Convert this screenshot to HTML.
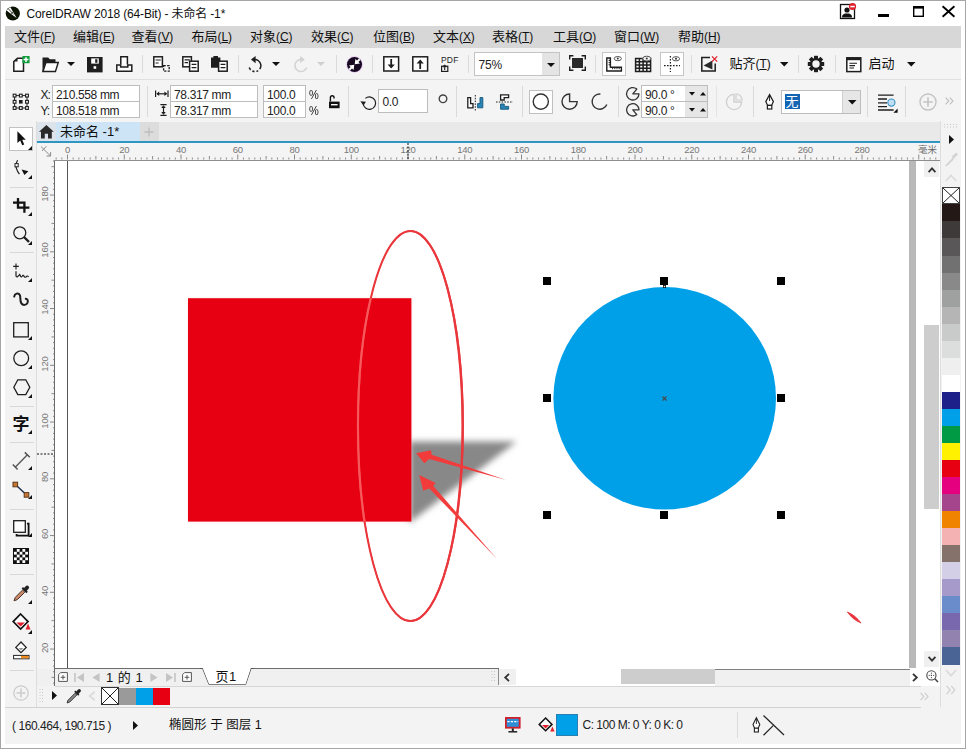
<!DOCTYPE html><html lang="zh"><head><meta charset="utf-8"><title>CorelDRAW 2018 (64-Bit) - 未命名 -1*</title><style>
*{box-sizing:border-box;margin:0;padding:0}
html,body{width:966px;height:749px;overflow:hidden;background:#fff}
body{position:relative;font-family:"Liberation Sans","Noto Sans CJK SC",sans-serif;font-size:12px;color:#1a1a1a}
.a{position:absolute}
.t{position:absolute;white-space:nowrap;line-height:1}
.box{position:absolute;background:#fff;border:1px solid #b8b8b8}
.sep{position:absolute;width:1px;background:#dcdcdc}
.hsep{position:absolute;height:1px;background:#d9d9d9}
svg{position:absolute;overflow:visible}
u{text-decoration:underline;text-underline-offset:1px}
</style></head><body>
<div class="a" style="left:0px;top:0px;width:966px;height:1px;background:#a6a6a6;"></div>
<div class="a" style="left:0px;top:0px;width:1px;height:749px;background:#a6a6a6;"></div>
<div class="a" style="left:965px;top:0px;width:1px;height:749px;background:#a6a6a6;"></div>
<div class="a" style="left:0px;top:748px;width:966px;height:1px;background:#a6a6a6;"></div>
<div class="a" style="left:5px;top:26px;width:956px;height:22px;background:#d7d7d7;"></div>
<div class="a" style="left:5px;top:48px;width:956px;height:74px;background:#f4f4f4;"></div>
<div class="a" style="left:5px;top:79px;width:956px;height:1px;background:#e0e0e0;"></div>
<div class="a" style="left:37px;top:122px;width:903px;height:20px;background:#e9e9e9;"></div>
<div class="a" style="left:5px;top:121px;width:32px;height:587px;background:#f3f3f3;"></div>
<div class="a" style="left:36px;top:121px;width:1px;height:586px;background:#dddddd;"></div>
<div class="a" style="left:37px;top:143px;width:903px;height:17px;background:#f4f4f4;"></div>
<div class="a" style="left:37px;top:160px;width:18px;height:526px;background:#f4f4f4;"></div>
<div class="a" style="left:909px;top:160px;width:7px;height:508px;background:#b9b9b9;"></div>
<div class="a" style="left:940px;top:121px;width:21px;height:587px;background:#f3f3f3;"></div>
<div class="a" style="left:940px;top:121px;width:1px;height:586px;background:#dddddd;"></div>
<div class="a" style="left:37px;top:669px;width:462px;height:17px;background:#f0f0f0;"></div>
<div class="a" style="left:715px;top:669px;width:195px;height:17px;background:#f0f0f0;"></div>
<div class="a" style="left:37px;top:686px;width:903px;height:22px;background:#f3f3f3;"></div>
<div class="a" style="left:5px;top:707px;width:956px;height:37px;background:#f3f3f3;"></div>
<div class="a" style="left:5px;top:706.5px;width:916px;height:1px;background:#d2d2d2;"></div>
<svg class="a" style="left:0;top:0" width="966" height="749" viewBox="0 0 966 749">
<defs><filter id="bl" x="-20%" y="-20%" width="140%" height="140%"><feGaussianBlur stdDeviation="3.2"/></filter>
<filter id="bl2" x="-20%" y="-20%" width="140%" height="140%"><feGaussianBlur stdDeviation="1.2"/></filter><clipPath id="sq"><rect x="188" y="298.2" width="223.4" height="223.4"/></clipPath></defs>
<polygon points="409,441.5 516.5,441.5 409,523" fill="#888888" filter="url(#bl)"/>
<rect x="187.5" y="297.6" width="224.6" height="224.6" fill="#f6cfcf" filter="url(#bl2)" opacity="0.35"/>
<rect x="188" y="298.2" width="223.4" height="223.4" fill="#e60012"/>
<circle cx="664.7" cy="398.3" r="111.3" fill="#00a0e9"/>
<path d="M357.3,426 A53.3,196 0 1 0 463.90000000000003,426 A53.3,196 0 1 0 357.3,426 Z M358.70000000000005,426 A51.4,194.1 0 1 0 461.5,426 A51.4,194.1 0 1 0 358.70000000000005,426 Z" fill="#e9373c" fill-rule="evenodd"/><ellipse cx="410.4" cy="426" rx="52.45" ry="195.1" fill="none" stroke="#e9373c" stroke-width="2"/><ellipse cx="410.4" cy="426" rx="52.45" ry="195.1" fill="none" stroke="#f6585c" stroke-width="2.2" clip-path="url(#sq)"/>
<polygon points="416,453.3 431,450.3 431.7,454.8 506.2,480 429.2,458.9 424.4,463.2" fill="#f23c3c"/>
<polygon points="419.2,475 435.7,483 433.3,486 497,559 429.3,488.4 423.2,490.8" fill="#f23c3c"/>
<path d="M847.4,612 Q855.6,615.4 861,623 Q852.6,619.6 847.4,612 Z" fill="#e8303a" stroke="#e8303a" stroke-width="0.8"/>
</svg>
<div class="a" style="left:543px;top:277px;width:8px;height:8px;background:#000;"></div>
<div class="a" style="left:543px;top:394px;width:8px;height:8px;background:#000;"></div>
<div class="a" style="left:543px;top:511px;width:8px;height:8px;background:#000;"></div>
<div class="a" style="left:660px;top:277px;width:8px;height:8px;background:#000;"></div>
<div class="a" style="left:660px;top:511px;width:8px;height:8px;background:#000;"></div>
<div class="a" style="left:777px;top:277px;width:8px;height:8px;background:#000;"></div>
<div class="a" style="left:777px;top:394px;width:8px;height:8px;background:#000;"></div>
<div class="a" style="left:777px;top:511px;width:8px;height:8px;background:#000;"></div>
<svg style="left:661.5px;top:395.5px" width="5" height="5" viewBox="0 0 5 5"><path d="M0.5,0.5 L4.5,4.5 M4.5,0.5 L0.5,4.5" stroke="#4a4a4a" stroke-width="1.2"/></svg>
<svg style="left:662.5px;top:285px" width="3" height="3" viewBox="0 0 3 3"><rect x="0.4" y="0.4" width="2.2" height="2.2" fill="#fff" stroke="#111" stroke-width="0.8"/></svg>
<svg style="left:5px;top:5.5px" width="16" height="16" viewBox="0 0 16 16"><circle cx="7.8" cy="7.5" r="7.1" fill="#0b1403"/><path d="M1.5,4.6 L5.2,1 L11.6,11.9 Z" fill="#fff"/><path d="M3.4,2.8 L8.6,8.4" stroke="#0b1403" stroke-width="0.8"/><path d="M5.6,8.2 L8.6,5.4" stroke="#0b1403" stroke-width="0.7"/></svg>
<div class="t" style="left:26.5px;top:7.5px;font-size:12px;color:#111;letter-spacing:-0.15px">CoreIDRAW 2018 (64-Bit) - 未命名 -1*</div>
<svg style="left:840px;top:4px" width="16" height="15" viewBox="0 0 16 15"><rect x="0.5" y="0.5" width="14" height="14" fill="#fff" stroke="#111" stroke-width="1.3"/><circle cx="7" cy="6" r="2.6" fill="#111"/><path d="M2,13.6 C2,10 4.5,9.6 7,9.6 C9.5,9.6 12,10 12,13.6 Z" fill="#111"/><circle cx="12.5" cy="2.5" r="3.6" fill="#e0202c"/><rect x="10.3" y="1.8" width="4.4" height="1.5" fill="#fff"/></svg>
<div class="a" style="left:878px;top:14px;width:11px;height:3px;background:#000;"></div>
<svg style="left:913px;top:6px" width="11" height="11" viewBox="0 0 11 11"><rect x="0.7" y="0.7" width="9.6" height="9.6" fill="none" stroke="#000" stroke-width="1.4"/><rect x="0" y="0" width="11" height="2.6" fill="#000"/></svg>
<svg style="left:942px;top:6px" width="13" height="11" viewBox="0 0 13 11"><path d="M0.6,0.3 L12.4,10.7 M12.4,0.3 L0.6,10.7" stroke="#000" stroke-width="1.9"/></svg>
<div class="t" style="left:14px;top:29.5px;font-size:13px;color:#111;">文件<span style="font-size:12px;letter-spacing:-0.1px">(<u>F</u>)</span></div>
<div class="t" style="left:73px;top:29.5px;font-size:13px;color:#111;">编辑<span style="font-size:12px;letter-spacing:-0.1px">(<u>E</u>)</span></div>
<div class="t" style="left:131.5px;top:29.5px;font-size:13px;color:#111;">查看<span style="font-size:12px;letter-spacing:-0.1px">(<u>V</u>)</span></div>
<div class="t" style="left:191.5px;top:29.5px;font-size:13px;color:#111;">布局<span style="font-size:12px;letter-spacing:-0.1px">(<u>L</u>)</span></div>
<div class="t" style="left:250px;top:29.5px;font-size:13px;color:#111;">对象<span style="font-size:12px;letter-spacing:-0.1px">(<u>C</u>)</span></div>
<div class="t" style="left:311px;top:29.5px;font-size:13px;color:#111;">效果<span style="font-size:12px;letter-spacing:-0.1px">(<u>C</u>)</span></div>
<div class="t" style="left:373px;top:29.5px;font-size:13px;color:#111;">位图<span style="font-size:12px;letter-spacing:-0.1px">(<u>B</u>)</span></div>
<div class="t" style="left:433px;top:29.5px;font-size:13px;color:#111;">文本<span style="font-size:12px;letter-spacing:-0.1px">(<u>X</u>)</span></div>
<div class="t" style="left:492px;top:29.5px;font-size:13px;color:#111;">表格<span style="font-size:12px;letter-spacing:-0.1px">(<u>T</u>)</span></div>
<div class="t" style="left:553px;top:29.5px;font-size:13px;color:#111;">工具<span style="font-size:12px;letter-spacing:-0.1px">(<u>O</u>)</span></div>
<div class="t" style="left:614px;top:29.5px;font-size:13px;color:#111;">窗口<span style="font-size:12px;letter-spacing:-0.1px">(<u>W</u>)</span></div>
<div class="t" style="left:678px;top:29.5px;font-size:13px;color:#111;">帮助<span style="font-size:12px;letter-spacing:-0.1px">(<u>H</u>)</span></div>
<svg style="left:13px;top:56px" width="17" height="16" viewBox="0 0 17 16"><path d="M0.8,15.3 V5.5 L4.5,2.3 H10.5 V15.3 Z" fill="#fff" stroke="#1e1e1e" stroke-width="1.5" stroke-linejoin="miter"/><path d="M0.8,5.5 L4.5,2.3 V5.5 Z" fill="#1e1e1e"/><rect x="9.4" y="0" width="7.2" height="7.2" fill="#0f9d3c"/><path d="M13,1.2 V6 M10.6,3.6 H15.4" stroke="#fff" stroke-width="1.5"/></svg>
<svg style="left:41.5px;top:56.5px" width="17" height="15.5" viewBox="0 0 17 15.5"><path d="M0.5,14.8 V0.5 H6.2 L7.8,2.3 H13.5 V5.2 H3.6 Z" fill="#1e1e1e"/><path d="M0.9,14.6 L3.9,5.6 H16.2 L13.4,14.6 Z" fill="#fff" stroke="#1e1e1e" stroke-width="1.5"/></svg>
<svg style="left:66.5px;top:62px" width="8" height="4" viewBox="0 0 8 4"><path d="M0,0 H8 L4.0,4 Z" fill="#111"/></svg>
<svg style="left:87px;top:56.5px" width="16" height="15.5" viewBox="0 0 16 15.5"><path d="M0,0 H15.6 V15.4 H0 Z" fill="#1e1e1e"/><rect x="4.2" y="1.4" width="7.6" height="5.2" fill="#fff"/><rect x="8.2" y="2.2" width="2.2" height="3.6" fill="#1e1e1e"/><rect x="6.6" y="9.2" width="2.6" height="2.6" fill="#fff"/></svg>
<svg style="left:116px;top:56px" width="17" height="16" viewBox="0 0 17 16"><path d="M4.8,8.6 V0.8 H11.4 V8.6" fill="#fff" stroke="#1e1e1e" stroke-width="1.5"/><path d="M0.8,9 H4.6 V11 H11.8 V9 H15.8 V15.2 H0.8 Z" fill="#fff" stroke="#1e1e1e" stroke-width="1.5"/></svg>
<div class="a" style="left:142px;top:55px;width:1px;height:18px;background:#dadada;"></div>
<svg style="left:152.5px;top:56px" width="17" height="16" viewBox="0 0 17 16"><rect x="0.8" y="0.8" width="8.6" height="10" fill="#fff" stroke="#1e1e1e" stroke-width="1.5"/><path d="M2.6,4 H7.8 M2.6,7 H5.6" stroke="#1e1e1e" stroke-width="1.2"/><rect x="10.6" y="9.6" width="5.6" height="5.6" fill="none" stroke="#1e1e1e" stroke-width="1.3" stroke-dasharray="2.2 1.3"/></svg>
<svg style="left:181.5px;top:56px" width="17" height="16" viewBox="0 0 17 16"><rect x="0.8" y="0.8" width="8.6" height="10" fill="#fff" stroke="#1e1e1e" stroke-width="1.5"/><path d="M2.6,3.8 H7.8 M2.6,6.6 H6" stroke="#1e1e1e" stroke-width="1.2"/><rect x="7.6" y="5.2" width="8.6" height="10" fill="#fff" stroke="#1e1e1e" stroke-width="1.5"/><path d="M9.6,8.4 H14.4 M9.6,11.6 H14.4" stroke="#1e1e1e" stroke-width="1.3"/></svg>
<svg style="left:211px;top:56px" width="17" height="16" viewBox="0 0 17 16"><path d="M0,1.6 H2.4 V0 H7 V1.6 H9.4 V11.8 H0 Z" fill="#1e1e1e"/><rect x="7.6" y="5.2" width="8.6" height="10" fill="#fff" stroke="#1e1e1e" stroke-width="1.5"/><path d="M9.6,8.4 H14.4 M9.6,11.6 H14.4" stroke="#1e1e1e" stroke-width="1.3"/></svg>
<div class="a" style="left:237.5px;top:55px;width:1px;height:18px;background:#dadada;"></div>
<svg style="left:247px;top:56px" width="17" height="16" viewBox="0 0 17 16"><path d="M7.2,3.6 A6,6 0 1 1 2.2,11.6" fill="none" stroke="#1e1e1e" stroke-width="1.5" stroke-dasharray="13.5 2 2 2 2 2 20"/><path d="M8.6,0 V7.2 L4,3.6 Z" fill="#1e1e1e"/></svg>
<svg style="left:272px;top:62px" width="8" height="4" viewBox="0 0 8 4"><path d="M0,0 H8 L4.0,4 Z" fill="#111"/></svg>
<svg style="left:291.5px;top:56px" width="17" height="16" viewBox="0 0 17 16"><path d="M9.6,3.6 A6,6 0 1 0 14.6,11.6" fill="none" stroke="#d2d2d2" stroke-width="1.5"/><path d="M8.2,0 V7.2 L12.8,3.6 Z" fill="#d2d2d2"/></svg>
<svg style="left:317px;top:62px" width="8" height="4" viewBox="0 0 8 4"><path d="M0,0 H8 L4.0,4 Z" fill="#cfcfcf"/></svg>
<div class="a" style="left:335.5px;top:55px;width:1px;height:18px;background:#dadada;"></div>
<svg style="left:345.5px;top:55.5px" width="17" height="17" viewBox="0 0 17 17"><circle cx="8.5" cy="8.5" r="8.3" fill="#e3c4ee"/><circle cx="8.5" cy="8.5" r="7.5" fill="#170a20"/><g transform="translate(17,0) scale(-1,1)"><path d="M8.3,8.3 L3,7.6 L4.6,6 L2.6,4 L4,2.6 L6,4.6 L7.6,3 Z" fill="#fff"/><path d="M8.7,8.7 L14,9.4 L12.4,11 L14.4,13 L13,14.4 L11,12.4 L9.4,14 Z" fill="#fff"/></g></svg>
<div class="a" style="left:372px;top:55px;width:1px;height:18px;background:#dadada;"></div>
<svg style="left:383px;top:56px" width="17" height="16" viewBox="0 0 17 16"><rect x="0.8" y="0.8" width="14.8" height="14.2" fill="#fff" stroke="#1e1e1e" stroke-width="1.5"/><path d="M8.2,3 V11" stroke="#1e1e1e" stroke-width="1.8"/><path d="M4.6,8.4 H11.8 L8.2,12.6 Z" fill="#1e1e1e"/></svg>
<svg style="left:412px;top:56px" width="17" height="16" viewBox="0 0 17 16"><rect x="0.8" y="0.8" width="14.8" height="14.2" fill="#fff" stroke="#1e1e1e" stroke-width="1.5"/><path d="M8.2,13 V5" stroke="#1e1e1e" stroke-width="1.8"/><path d="M4.6,7.6 H11.8 L8.2,3.4 Z" fill="#1e1e1e"/></svg>
<div class="t" style="left:441px;top:56px;font-size:8.5px;color:#1e1e1e;letter-spacing:0.2px;font-weight:400">PDF</div>
<svg style="left:441px;top:65px" width="8" height="7" viewBox="0 0 8 7"><rect x="0.6" y="1.2" width="6.2" height="5.2" fill="none" stroke="#1e1e1e" stroke-width="1.2"/><path d="M3.7,0 V5 M2,2 L3.7,0.2 L5.4,2" stroke="#1e1e1e" stroke-width="1.1" fill="none"/></svg>
<div class="a" style="left:467.5px;top:55px;width:1px;height:18px;background:#dadada;"></div>
<div class="box" style="left:474px;top:52px;width:86px;height:24px;border-color:#c3c3c3"></div>
<div class="a" style="left:542px;top:53px;width:17px;height:22px;background:#e4e4e4;"></div>
<svg style="left:546.5px;top:62.5px" width="8" height="4" viewBox="0 0 8 4"><path d="M0,0 H8 L4.0,4 Z" fill="#111"/></svg>
<div class="t" style="left:478.5px;top:58.5px;font-size:12px;color:#222;letter-spacing:-0.2px">75%</div>
<svg style="left:568.5px;top:55px" width="17" height="16" viewBox="0 0 17 16"><rect x="3" y="3" width="11" height="10" fill="#2a2a2a"/><path d="M0.7,4.4 V0.7 H4.4 M12.6,0.7 H16.3 V4.4 M16.3,11.6 V15.3 H12.6 M4.4,15.3 H0.7 V11.6" fill="none" stroke="#1e1e1e" stroke-width="1.4"/></svg>
<div class="a" style="left:595px;top:55px;width:1px;height:18px;background:#dadada;"></div>
<div class="box" style="left:602px;top:52px;width:24px;height:24px;border-color:#c6c6c6"></div>
<svg style="left:606px;top:56px" width="17" height="16" viewBox="0 0 17 16"><path d="M0.8,2 V15 H15.4 V11.2 H4.4 V2 Z" fill="#fff" stroke="#1e1e1e" stroke-width="1.4"/><path d="M2.6,4.4 H4 M2.6,6.6 H4 M2.6,8.8 H4 M6.6,13.2 V11.8 M8.8,13.2 V11.8 M11,13.2 V11.8 M13.2,13.2 V11.8" stroke="#1e1e1e" stroke-width="1"/><ellipse cx="11.8" cy="2.6" rx="3.6" ry="2.1" fill="#fff" stroke="#555" stroke-width="1"/><circle cx="11.8" cy="2.6" r="1" fill="#333"/></svg>
<svg style="left:635px;top:55.5px" width="17" height="16" viewBox="0 0 17 16"><path d="M0.6,2.6 V15.4 H15.6 V2.6 Z M4.4,2.6 V15.4 M8.1,2.6 V15.4 M11.8,2.6 V15.4 M0.6,5.8 H15.6 M0.6,9 H15.6 M0.6,12.2 H15.6" fill="none" stroke="#1e1e1e" stroke-width="1.5"/><ellipse cx="11.8" cy="2.6" rx="4" ry="2.4" fill="#f3f3f3" stroke="#555" stroke-width="1"/><circle cx="11.8" cy="2.6" r="1" fill="#333"/></svg>
<div class="box" style="left:660px;top:52px;width:24px;height:24px;border-color:#c6c6c6"></div>
<svg style="left:664px;top:56px" width="17" height="16" viewBox="0 0 17 16"><path d="M6.4,0 V16 M0,9.6 H16" stroke="#1e1e1e" stroke-width="1.2" stroke-dasharray="1.6 1.4"/><ellipse cx="12" cy="2.8" rx="3.6" ry="2.1" fill="#fff" stroke="#555" stroke-width="1"/><circle cx="12" cy="2.8" r="1" fill="#333"/></svg>
<div class="a" style="left:690.5px;top:55px;width:1px;height:18px;background:#dadada;"></div>
<svg style="left:701px;top:56px" width="17" height="16" viewBox="0 0 17 16"><path d="M9,1.6 H0.8 V15 H14.2 V7.4" fill="none" stroke="#1e1e1e" stroke-width="1.5"/><path d="M2.6,9.4 L11.4,4.4 V13.4 Z" fill="#2a2a2a"/><path d="M11,0.4 L16.2,5.6 M16.2,0.4 L11,5.6" stroke="#e0202c" stroke-width="1.3"/></svg>
<div class="t" style="left:729.5px;top:57px;font-size:13px;color:#111;">贴齐<span style="font-size:12px;letter-spacing:-0.1px">(<u>T</u>)</span></div>
<svg style="left:779.5px;top:62px" width="8.5" height="4.5" viewBox="0 0 8.5 4.5"><path d="M0,0 H8.5 L4.25,4.5 Z" fill="#111"/></svg>
<div class="a" style="left:798px;top:55px;width:1px;height:18px;background:#dadada;"></div>
<svg style="left:808px;top:56px" width="16" height="16" viewBox="0 0 16 16"><g transform="translate(8,8)"><rect x="-2" y="-8.2" width="4" height="4" fill="#1e1e1e" transform="rotate(0)"/><rect x="-2" y="-8.2" width="4" height="4" fill="#1e1e1e" transform="rotate(45)"/><rect x="-2" y="-8.2" width="4" height="4" fill="#1e1e1e" transform="rotate(90)"/><rect x="-2" y="-8.2" width="4" height="4" fill="#1e1e1e" transform="rotate(135)"/><rect x="-2" y="-8.2" width="4" height="4" fill="#1e1e1e" transform="rotate(180)"/><rect x="-2" y="-8.2" width="4" height="4" fill="#1e1e1e" transform="rotate(225)"/><rect x="-2" y="-8.2" width="4" height="4" fill="#1e1e1e" transform="rotate(270)"/><rect x="-2" y="-8.2" width="4" height="4" fill="#1e1e1e" transform="rotate(315)"/><circle r="4.9" fill="none" stroke="#1e1e1e" stroke-width="2.4"/></g></svg>
<div class="a" style="left:835px;top:55px;width:1px;height:18px;background:#dadada;"></div>
<svg style="left:845.5px;top:56.5px" width="16" height="15.5" viewBox="0 0 16 15.5"><rect x="0.8" y="0.8" width="14" height="13.8" fill="#fff" stroke="#1e1e1e" stroke-width="1.5"/><rect x="0.8" y="0.8" width="14" height="2.4" fill="#1e1e1e"/><path d="M3.4,6.2 H11 M3.4,8.6 H9 M3.4,11 H8" stroke="#1e1e1e" stroke-width="1.1"/></svg>
<div class="t" style="left:868.5px;top:57px;font-size:13px;color:#111;">启动</div>
<svg style="left:906.5px;top:62px" width="8.5" height="4.5" viewBox="0 0 8.5 4.5"><path d="M0,0 H8.5 L4.25,4.5 Z" fill="#111"/></svg>
<svg style="left:13px;top:93.5px" width="16" height="16" viewBox="0 0 16 16"><path d="M1.6,1.6 H14 V14 H1.6 Z" fill="none" stroke="#1e1e1e" stroke-width="1"/><rect x="0.20000000000000018" y="0.20000000000000018" width="2.8" height="2.8" fill="#fff" stroke="#1e1e1e" stroke-width="1.1"/><rect x="0.20000000000000018" y="6.4" width="2.8" height="2.8" fill="#fff" stroke="#1e1e1e" stroke-width="1.1"/><rect x="0.20000000000000018" y="12.6" width="2.8" height="2.8" fill="#fff" stroke="#1e1e1e" stroke-width="1.1"/><rect x="6.4" y="0.20000000000000018" width="2.8" height="2.8" fill="#fff" stroke="#1e1e1e" stroke-width="1.1"/><rect x="6.0" y="6.0" width="3.6" height="3.6" fill="#1e1e1e"/><rect x="6.4" y="12.6" width="2.8" height="2.8" fill="#fff" stroke="#1e1e1e" stroke-width="1.1"/><rect x="12.6" y="0.20000000000000018" width="2.8" height="2.8" fill="#fff" stroke="#1e1e1e" stroke-width="1.1"/><rect x="12.6" y="6.4" width="2.8" height="2.8" fill="#fff" stroke="#1e1e1e" stroke-width="1.1"/><rect x="12.6" y="12.6" width="2.8" height="2.8" fill="#fff" stroke="#1e1e1e" stroke-width="1.1"/></svg>
<div class="t" style="left:40.5px;top:88.5px;font-size:12px;color:#222;letter-spacing:-1px">X:</div>
<div class="t" style="left:40.5px;top:104.5px;font-size:12px;color:#222;letter-spacing:-1px">Y:</div>
<div class="box" style="left:52px;top:85px;width:88px;height:17px;border-color:#bdbdbd"></div>
<div class="box" style="left:52px;top:101px;width:88px;height:17px;border-color:#bdbdbd"></div>
<div class="t" style="left:56px;top:88.5px;font-size:12px;color:#222;letter-spacing:-0.35px">210.558 mm</div>
<div class="t" style="left:56px;top:104.5px;font-size:12px;color:#222;letter-spacing:-0.35px">108.518 mm</div>
<div class="a" style="left:147px;top:86px;width:1px;height:31px;background:#dadada;"></div>
<svg style="left:155px;top:90px" width="14" height="8" viewBox="0 0 14 8"><path d="M0.6,0.6 V7 M13,0.6 V7" stroke="#1e1e1e" stroke-width="1.2"/><path d="M2,3.8 H11.6" stroke="#1e1e1e" stroke-width="1.2"/><path d="M1.4,3.8 L4.2,1.6 V6 Z M12.2,3.8 L9.4,1.6 V6 Z" fill="#1e1e1e"/></svg>
<svg style="left:159.5px;top:103.5px" width="7" height="12" viewBox="0 0 7 12"><path d="M0.4,0.6 H6.6 M0.4,11.4 H6.6" stroke="#1e1e1e" stroke-width="1.2"/><path d="M3.5,2 V10" stroke="#1e1e1e" stroke-width="1.2"/><path d="M3.5,1.2 L1.2,4 H5.8 Z M3.5,10.8 L1.2,8 H5.8 Z" fill="#1e1e1e"/></svg>
<div class="box" style="left:170px;top:85px;width:88px;height:17px;border-color:#bdbdbd"></div>
<div class="box" style="left:170px;top:101px;width:88px;height:17px;border-color:#bdbdbd"></div>
<div class="t" style="left:174px;top:88.5px;font-size:12px;color:#222;letter-spacing:-0.35px">78.317 mm</div>
<div class="t" style="left:174px;top:104.5px;font-size:12px;color:#222;letter-spacing:-0.35px">78.317 mm</div>
<div class="box" style="left:263px;top:85px;width:43px;height:17px;border-color:#bdbdbd"></div>
<div class="box" style="left:263px;top:101px;width:43px;height:17px;border-color:#bdbdbd"></div>
<div class="t" style="left:267px;top:88.5px;font-size:12px;color:#222;letter-spacing:-0.35px">100.0</div>
<div class="t" style="left:267px;top:104.5px;font-size:12px;color:#222;letter-spacing:-0.35px">100.0</div>
<div class="t" style="left:308.5px;top:88.5px;font-size:12px;color:#222;letter-spacing:-0.3px;transform:scaleX(0.92);transform-origin:left">%</div>
<div class="t" style="left:308.5px;top:104.5px;font-size:12px;color:#222;letter-spacing:-0.3px;transform:scaleX(0.92);transform-origin:left">%</div>
<svg style="left:328.5px;top:95px" width="11" height="13.5" viewBox="0 0 11 13.5"><rect x="0" y="6.6" width="10.6" height="6.6" fill="#111"/><rect x="2" y="9" width="6.6" height="1.4" fill="#fff"/><path d="M1.4,6.6 V2.6 Q1.4,0.8 3.2,0.8 Q5,0.8 5,2.6 V3.6" fill="none" stroke="#111" stroke-width="1.4"/></svg>
<div class="a" style="left:348px;top:86px;width:1px;height:31px;background:#dadada;"></div>
<svg style="left:360px;top:95px" width="16" height="16" viewBox="0 0 16 16"><path d="M3.2,8.2 A6.2,6.2 0 1 0 5.4,3.4" fill="none" stroke="#1e1e1e" stroke-width="1.2"/><path d="M0.4,6.2 L6,6.8 L3.4,10.4 Z" fill="#1e1e1e"/></svg>
<div class="box" style="left:378px;top:89px;width:50px;height:24px;border-color:#bdbdbd"></div>
<div class="t" style="left:382.5px;top:96px;font-size:12px;color:#222;letter-spacing:-0.35px">0.0</div>
<svg style="left:437.5px;top:94px" width="10" height="10" viewBox="0 0 10 10"><circle cx="5" cy="4.8" r="3.8" fill="none" stroke="#444" stroke-width="1.4"/></svg>
<div class="a" style="left:456px;top:86px;width:1px;height:31px;background:#dadada;"></div>
<svg style="left:466.5px;top:94.5px" width="17" height="16" viewBox="0 0 17 16"><path d="M0.8,2.6 H3.6 V8.6 H6 V12.8 H0.8 Z" fill="#fff" stroke="#1e1e1e" stroke-width="1.3"/><path d="M15.8,2.6 H13 V8.6 H10.6 V12.8 H15.8 Z" fill="#2a86b4" stroke="#1c5f85" stroke-width="1"/><path d="M8.3,0 V16" stroke="#1e1e1e" stroke-width="1" stroke-dasharray="1.5 1.3"/></svg>
<svg style="left:496px;top:94px" width="17" height="16" viewBox="0 0 17 16"><path d="M4.6,0.8 H12.6 V3.6 H8.2 V6 H4.6 Z" fill="#fff" stroke="#1e1e1e" stroke-width="1.3"/><path d="M4.6,15.2 H12.6 V12.4 H8.2 V10 H4.6 Z" fill="#2a86b4" stroke="#1c5f85" stroke-width="1"/><path d="M0,8 H17" stroke="#1e1e1e" stroke-width="1" stroke-dasharray="1.5 1.3"/></svg>
<div class="a" style="left:522px;top:86px;width:1px;height:31px;background:#dadada;"></div>
<div class="box" style="left:529px;top:90px;width:24px;height:24px;border-color:#c0c0c0"></div>
<svg style="left:532px;top:93px" width="18" height="18" viewBox="0 0 18 18"><circle cx="8.8" cy="8.6" r="7.6" fill="none" stroke="#333" stroke-width="1.4"/></svg>
<svg style="left:561px;top:93px" width="18" height="18" viewBox="0 0 18 18"><path d="M8.6,8.6 V1 A7.6,7.6 0 1 0 16.2,8.6 Z" fill="none" stroke="#333" stroke-width="1.4"/></svg>
<svg style="left:591px;top:93px" width="18" height="18" viewBox="0 0 18 18"><path d="M9.4,1 A7.6,7.6 0 1 0 15.8,11.4" fill="none" stroke="#333" stroke-width="1.4"/></svg>
<div class="a" style="left:617.5px;top:86px;width:1px;height:31px;background:#dadada;"></div>
<svg style="left:626px;top:86.5px" width="14" height="14" viewBox="0 0 14 14"><path d="M6.8,6.8 L13,6.8 A6.2,6.2 0 1 1 10.79,2.05 Z" fill="none" stroke="#333" stroke-width="1.3" stroke-linejoin="round"/></svg>
<svg style="left:626px;top:102.5px" width="14" height="14" viewBox="0 0 14 14"><path d="M6.8,6.8 L13,6.8 A6.2,6.2 0 1 0 10.79,11.55 Z" fill="none" stroke="#333" stroke-width="1.3" stroke-linejoin="round"/></svg>
<div class="box" style="left:641px;top:85px;width:67px;height:17px;border-color:#bdbdbd"></div>
<div class="box" style="left:641px;top:101px;width:67px;height:17px;border-color:#bdbdbd"></div>
<div class="a" style="left:684.5px;top:86px;width:22.5px;height:15px;background:#e6e6e6;"></div>
<div class="a" style="left:684.5px;top:102px;width:22.5px;height:15px;background:#e6e6e6;"></div>
<svg style="left:688.5px;top:91.5px" width="6" height="3.5" viewBox="0 0 6 3.5"><path d="M0,0 H6 L3.0,3.5 Z" fill="#111"/></svg>
<svg style="left:700px;top:91.5px" width="6" height="3.5" viewBox="0 0 6 3.5"><path d="M0,3.5 H6 L3,0 Z" fill="#111"/></svg>
<svg style="left:688.5px;top:107.5px" width="6" height="3.5" viewBox="0 0 6 3.5"><path d="M0,0 H6 L3.0,3.5 Z" fill="#111"/></svg>
<svg style="left:700px;top:107.5px" width="6" height="3.5" viewBox="0 0 6 3.5"><path d="M0,3.5 H6 L3,0 Z" fill="#111"/></svg>
<div class="t" style="left:645px;top:88.5px;font-size:12px;color:#222;letter-spacing:-0.35px">90.0 °</div>
<div class="t" style="left:645px;top:104.5px;font-size:12px;color:#222;letter-spacing:-0.35px">90.0 °</div>
<div class="a" style="left:716px;top:86px;width:1px;height:31px;background:#e4e4e4;"></div>
<svg style="left:725px;top:93px" width="18" height="18" viewBox="0 0 18 18"><path d="M9,9 V1.4 A7.6,7.6 0 1 0 16.6,9 Z" fill="none" stroke="#d0d0d0" stroke-width="1.4"/><path d="M11,7 V0.8 A7,7 0 0 1 17.2,7 Z" fill="none" stroke="#d0d0d0" stroke-width="1.2"/></svg>
<div class="a" style="left:753px;top:86px;width:1px;height:31px;background:#dadada;"></div>
<svg style="left:765px;top:93.5px" width="10" height="16" viewBox="0 0 10 16"><path d="M4.6,0.6 L8.4,7.6 L6.6,11.4 H2.6 L0.8,7.6 Z" fill="#fff" stroke="#1e1e1e" stroke-width="1.2"/><path d="M4.6,1.6 V7" stroke="#1e1e1e" stroke-width="1"/><rect x="2.4" y="11.4" width="4.4" height="3.6" fill="#fff" stroke="#1e1e1e" stroke-width="1.2"/></svg>
<div class="box" style="left:781px;top:90px;width:80px;height:24px;border-color:#bdbdbd"></div>
<div class="a" style="left:842.5px;top:91px;width:17.5px;height:22px;background:#e6e6e6;"></div>
<div class="a" style="left:842px;top:91px;width:1px;height:22px;background:#d0d0d0;"></div>
<svg style="left:847.5px;top:99.5px" width="8.5" height="4.5" viewBox="0 0 8.5 4.5"><path d="M0,0 H8.5 L4.25,4.5 Z" fill="#111"/></svg>
<div class="a" style="left:784.5px;top:93.5px;width:15px;height:15.5px;background:#1464b4;"></div>
<div class="t" style="left:785.5px;top:94.5px;font-size:13px;color:#fff;">无</div>
<div class="a" style="left:867px;top:86px;width:1px;height:31px;background:#dadada;"></div>
<svg style="left:877.5px;top:93.5px" width="20" height="19" viewBox="0 0 20 19"><path d="M0,1.2 H15.6 M0,5 H9 M0,8.8 H9 M0,12.6 H9 M0,16 H15.6" stroke="#1e1e1e" stroke-width="1.3"/><circle cx="13.4" cy="8.6" r="3.6" fill="#bfe0f4" stroke="#3b8fc0" stroke-width="1.1"/><path d="M19.6,14.6 V18.8 H15.4 Z" fill="#111"/></svg>
<div class="a" style="left:904.5px;top:86px;width:1px;height:31px;background:#dadada;"></div>
<svg style="left:919px;top:92.5px" width="18" height="18" viewBox="0 0 18 18"><circle cx="9" cy="9" r="8" fill="none" stroke="#c4c4c4" stroke-width="1.4"/><path d="M9,4.2 V13.8 M4.2,9 H13.8" stroke="#c4c4c4" stroke-width="1.6"/></svg>
<svg style="left:944.5px;top:97px" width="9" height="8" viewBox="0 0 9 8"><path d="M0.6,0.6 L3.8,4 L0.6,7.4 M4.8,0.6 L8,4 L4.8,7.4" fill="none" stroke="#c0c0c0" stroke-width="1.2"/></svg>
<div class="a" style="left:37px;top:122px;width:19px;height:20px;background:#dde3ea;"></div>
<div class="a" style="left:56px;top:122px;width:84px;height:20px;background:#cde4f6;"></div>
<div class="a" style="left:140px;top:122px;width:18.5px;height:20px;background:#dcdcdc;"></div>
<svg style="left:38.5px;top:124.5px" width="14.5" height="14.5" viewBox="0 0 14.5 14.5"><path d="M7.4,0 L14.8,6.8 H12.8 V13.4 H9 V8.8 H5.8 V13.4 H2 V6.8 H0 Z" fill="#2a2a2a"/></svg>
<div class="t" style="left:60px;top:125px;font-size:13px;color:#111;">未命名 -1*</div>
<svg style="left:144px;top:127px" width="10" height="10" viewBox="0 0 10 10"><path d="M5,0.5 V9.5 M0.5,5 H9.5" stroke="#bdbdbd" stroke-width="1.3"/></svg>
<div class="a" style="left:37px;top:141.4px;width:903px;height:1.7px;background:#2f96c2;"></div>
<svg style="left:944px;top:124px" width="14" height="4" viewBox="0 0 14 4"><path d="M0,0.5 H14 M0,3 H14" stroke="#c8c8c8" stroke-width="1" stroke-dasharray="1 2"/></svg>
<svg style="left:949px;top:135px" width="5" height="9" viewBox="0 0 5 9"><path d="M0,0 L5,4.5 L0,9 Z" fill="#111"/></svg>
<div class="box" style="left:9px;top:127px;width:24px;height:24px;border-color:#c2c2c2"></div>
<svg style="left:17px;top:131px" width="9" height="15" viewBox="0 0 9 15"><path d="M0.4,0.2 V12 L3.2,9.4 L5.2,14.2 L7.2,13.4 L5.2,8.8 H8.8 Z" fill="#111"/></svg>
<svg style="left:28px;top:146px" width="4" height="4" viewBox="0 0 4 4"><path d="M4,0 V4 H0 Z" fill="#111"/></svg>
<svg style="left:13px;top:159px" width="20" height="20" viewBox="0 0 20 20"><path d="M4.6,1.2 C3,4 2.6,7 3.4,9.4 C4,11.4 5.2,13.6 6.4,15.2" fill="none" stroke="#1e1e1e" stroke-width="1.2"/><rect x="2" y="4.6" width="3.2" height="3.2" fill="#fff" stroke="#1e1e1e" stroke-width="1"/><path d="M8.6,10.6 L15.4,12.2 L11.4,16 Z" fill="#111"/></svg>
<svg style="left:28px;top:175px" width="4" height="4" viewBox="0 0 4 4"><path d="M4,0 V4 H0 Z" fill="#111"/></svg>
<div class="a" style="left:10px;top:187px;width:24px;height:1px;background:#d8d8d8;"></div>
<svg style="left:13px;top:198px" width="17" height="17" viewBox="0 0 17 17"><path d="M5,0 V9.6 H16.4 M0,4.6 H11.4 V14.8" fill="none" stroke="#111" stroke-width="2.3"/></svg>
<svg style="left:28px;top:212px" width="4" height="4" viewBox="0 0 4 4"><path d="M4,0 V4 H0 Z" fill="#111"/></svg>
<svg style="left:12.5px;top:226px" width="18" height="18" viewBox="0 0 18 18"><circle cx="6.8" cy="6.8" r="6" fill="none" stroke="#1e1e1e" stroke-width="1.3"/><path d="M11,11 L16,16" stroke="#1e1e1e" stroke-width="2.4"/></svg>
<svg style="left:28px;top:241px" width="4" height="4" viewBox="0 0 4 4"><path d="M4,0 V4 H0 Z" fill="#111"/></svg>
<div class="a" style="left:10px;top:252px;width:24px;height:1px;background:#d8d8d8;"></div>
<svg style="left:12px;top:263px" width="18" height="17" viewBox="0 0 18 17"><path d="M4,0.6 V6.4 M1.2,3.4 H6.8" stroke="#1e1e1e" stroke-width="1.1"/><path d="M4,8.2 V12.2 Q4,14.4 5.6,13.6 Q7,12.6 7.6,11.4 Q8.4,12 8.6,13.4 Q9.4,14.4 10.4,13 Q11,12 11.6,12.4 Q12.2,13.6 13,14.2 Q14.2,14.4 14.8,13.2 Q15.6,12.6 16.6,13.8" fill="none" stroke="#1e1e1e" stroke-width="1.2"/></svg>
<svg style="left:28px;top:278px" width="4" height="4" viewBox="0 0 4 4"><path d="M4,0 V4 H0 Z" fill="#111"/></svg>
<svg style="left:13px;top:292px" width="17" height="17" viewBox="0 0 17 17"><path d="M1.2,4.6 C1.6,1.4 5.4,0.4 6.8,3 C8,5.6 6.6,8.6 8.4,11.4 C9.8,13.6 13.4,13.4 14.6,10.6 C15.4,8.4 14,6.6 12.8,6.8" fill="none" stroke="#1e1e1e" stroke-width="2" stroke-linecap="round"/></svg>
<svg style="left:13px;top:321.5px" width="16" height="16" viewBox="0 0 16 16"><rect x="0.7" y="0.7" width="14.6" height="14.2" fill="none" stroke="#1e1e1e" stroke-width="1.3"/></svg>
<svg style="left:28px;top:336px" width="4" height="4" viewBox="0 0 4 4"><path d="M4,0 V4 H0 Z" fill="#111"/></svg>
<svg style="left:13px;top:350px" width="17" height="17" viewBox="0 0 17 17"><circle cx="8.2" cy="8.2" r="7.4" fill="none" stroke="#1e1e1e" stroke-width="1.3"/></svg>
<svg style="left:28px;top:365px" width="4" height="4" viewBox="0 0 4 4"><path d="M4,0 V4 H0 Z" fill="#111"/></svg>
<svg style="left:12.5px;top:379px" width="18" height="17" viewBox="0 0 18 17"><path d="M0.8,8.2 L4.8,0.8 H12.8 L16.8,8.2 L12.8,15.6 H4.8 Z" fill="none" stroke="#1e1e1e" stroke-width="1.3"/></svg>
<svg style="left:28px;top:394px" width="4" height="4" viewBox="0 0 4 4"><path d="M4,0 V4 H0 Z" fill="#111"/></svg>
<div class="a" style="left:10px;top:405.5px;width:24px;height:1px;background:#d8d8d8;"></div>
<div class="t" style="left:12.5px;top:415.5px;font-size:17px;color:#111;font-weight:700">字</div>
<svg style="left:28px;top:430px" width="4" height="4" viewBox="0 0 4 4"><path d="M4,0 V4 H0 Z" fill="#111"/></svg>
<div class="a" style="left:10px;top:442px;width:24px;height:1px;background:#d8d8d8;"></div>
<svg style="left:12px;top:452px" width="18" height="18" viewBox="0 0 18 18"><path d="M3.2,15.2 L15.4,2.8" stroke="#555" stroke-width="1.3"/><path d="M0.8,12.6 L5.6,17.6 M12.8,0.4 L17.8,5.2" stroke="#555" stroke-width="1.5"/></svg>
<svg style="left:28px;top:466px" width="4" height="4" viewBox="0 0 4 4"><path d="M4,0 V4 H0 Z" fill="#111"/></svg>
<svg style="left:12px;top:481px" width="18" height="18" viewBox="0 0 18 18"><path d="M3.4,3.6 L14.6,14" stroke="#1b2a4a" stroke-width="1.4"/><rect x="1" y="1.2" width="4.6" height="4.6" fill="#c87532" stroke="#5a3a1e" stroke-width="1"/><rect x="12.2" y="11.6" width="4.6" height="4.6" fill="#c87532" stroke="#5a3a1e" stroke-width="1"/></svg>
<svg style="left:28px;top:495px" width="4" height="4" viewBox="0 0 4 4"><path d="M4,0 V4 H0 Z" fill="#111"/></svg>
<div class="a" style="left:10px;top:508.5px;width:24px;height:1px;background:#d8d8d8;"></div>
<svg style="left:13px;top:519.5px" width="17" height="17" viewBox="0 0 17 17"><path d="M14,3.6 H15.6 V15.6 H3.6 V14" fill="none" stroke="#111" stroke-width="1.8"/><rect x="0.7" y="0.7" width="11.6" height="11.6" fill="#fff" stroke="#1e1e1e" stroke-width="1.3"/></svg>
<svg style="left:28px;top:533px" width="4" height="4" viewBox="0 0 4 4"><path d="M4,0 V4 H0 Z" fill="#111"/></svg>
<svg style="left:13px;top:548px" width="16" height="16" viewBox="0 0 16 16"><rect x="0" y="0" width="16" height="16" fill="#111"/><rect x="1.0" y="3.8" width="2.8" height="2.8" fill="#fff"/><rect x="1.0" y="9.399999999999999" width="2.8" height="2.8" fill="#fff"/><rect x="3.8" y="1.0" width="2.8" height="2.8" fill="#fff"/><rect x="3.8" y="6.6" width="2.8" height="2.8" fill="#fff"/><rect x="3.8" y="12.2" width="2.8" height="2.8" fill="#fff"/><rect x="6.6" y="3.8" width="2.8" height="2.8" fill="#fff"/><rect x="6.6" y="9.399999999999999" width="2.8" height="2.8" fill="#fff"/><rect x="9.399999999999999" y="1.0" width="2.8" height="2.8" fill="#fff"/><rect x="9.399999999999999" y="6.6" width="2.8" height="2.8" fill="#fff"/><rect x="9.399999999999999" y="12.2" width="2.8" height="2.8" fill="#fff"/><rect x="12.2" y="3.8" width="2.8" height="2.8" fill="#fff"/><rect x="12.2" y="9.399999999999999" width="2.8" height="2.8" fill="#fff"/></svg>
<div class="a" style="left:10px;top:574px;width:24px;height:1px;background:#d8d8d8;"></div>
<svg style="left:13px;top:585px" width="17" height="17" viewBox="0 0 17 17"><path d="M1,15.8 L2.2,12.4 L9.6,5 L11.8,7.2 L4.4,14.6 Z" fill="#c98a6a" stroke="#4a3226" stroke-width="1"/><path d="M8.6,3.4 L10,2 L11,3 L13.2,0.8 Q14.6,0 15.6,1.2 Q16.6,2.4 15.8,3.6 L13.8,5.8 L14.8,6.8 L13.4,8.2 Z" fill="#222"/></svg>
<svg style="left:28px;top:600px" width="4" height="4" viewBox="0 0 4 4"><path d="M4,0 V4 H0 Z" fill="#111"/></svg>
<svg style="left:12px;top:613px" width="20" height="20" viewBox="0 0 20 20"><path d="M8.6,1 L16,8.6 L8.6,16 L1.2,8.6 Z" fill="#fff" stroke="#111" stroke-width="1.7"/><path d="M4.4,9.4 H12.8 L8.6,13.6 Z" fill="#e0202c"/><path d="M16,10.6 L18.6,16.4 H13.6 Z" fill="#e0202c"/></svg>
<svg style="left:28px;top:630px" width="4" height="4" viewBox="0 0 4 4"><path d="M4,0 V4 H0 Z" fill="#111"/></svg>
<svg style="left:13px;top:641px" width="17" height="19" viewBox="0 0 17 19"><path d="M8,1 L13.2,6.4 L8,11.6 L2.8,6.4 Z" fill="#fff" stroke="#222" stroke-width="1.3"/><path d="M5.4,7 H10.6 L8,9.6 Z" fill="#999"/><rect x="0.6" y="14.4" width="15.4" height="3.4" fill="#fff" stroke="#222" stroke-width="1"/><rect x="8" y="14.9" width="7.6" height="2.4" fill="#f08a1c"/></svg>
<div class="a" style="left:10px;top:669.5px;width:24px;height:1px;background:#d8d8d8;"></div>
<svg style="left:13px;top:685px" width="16" height="16" viewBox="0 0 16 16"><circle cx="8" cy="8" r="7.2" fill="none" stroke="#cdcdcd" stroke-width="1.3"/><path d="M8,3.6 V12.4 M3.6,8 H12.4" stroke="#cdcdcd" stroke-width="1.6"/></svg>
<svg style="left:37px;top:143px" width="903" height="16" viewBox="0 0 903 16"><path d="M56.15,16.5 v-2 M61.83,16.5 v-2 M67.50,16.5 v-5 M73.17,16.5 v-2 M78.85,16.5 v-2 M84.53,16.5 v-2 M90.20,16.5 v-2 M95.88,16.5 v-3.5 M101.55,16.5 v-2 M107.22,16.5 v-2 M112.90,16.5 v-2 M118.57,16.5 v-2 M124.25,16.5 v-5 M129.93,16.5 v-2 M135.60,16.5 v-2 M141.27,16.5 v-2 M146.95,16.5 v-2 M152.62,16.5 v-3.5 M158.30,16.5 v-2 M163.97,16.5 v-2 M169.65,16.5 v-2 M175.32,16.5 v-2 M181.00,16.5 v-5 M186.68,16.5 v-2 M192.35,16.5 v-2 M198.03,16.5 v-2 M203.70,16.5 v-2 M209.38,16.5 v-3.5 M215.05,16.5 v-2 M220.72,16.5 v-2 M226.40,16.5 v-2 M232.07,16.5 v-2 M237.75,16.5 v-5 M243.42,16.5 v-2 M249.10,16.5 v-2 M254.78,16.5 v-2 M260.45,16.5 v-2 M266.12,16.5 v-3.5 M271.80,16.5 v-2 M277.48,16.5 v-2 M283.15,16.5 v-2 M288.82,16.5 v-2 M294.50,16.5 v-5 M300.17,16.5 v-2 M305.85,16.5 v-2 M311.52,16.5 v-2 M317.20,16.5 v-2 M322.88,16.5 v-3.5 M328.55,16.5 v-2 M334.22,16.5 v-2 M339.90,16.5 v-2 M345.57,16.5 v-2 M351.25,16.5 v-5 M356.93,16.5 v-2 M362.60,16.5 v-2 M368.27,16.5 v-2 M373.95,16.5 v-2 M379.62,16.5 v-3.5 M385.30,16.5 v-2 M390.97,16.5 v-2 M396.65,16.5 v-2 M402.32,16.5 v-2 M408.00,16.5 v-5 M413.68,16.5 v-2 M419.35,16.5 v-2 M425.02,16.5 v-2 M430.70,16.5 v-2 M436.38,16.5 v-3.5 M442.05,16.5 v-2 M447.72,16.5 v-2 M453.40,16.5 v-2 M459.07,16.5 v-2 M464.75,16.5 v-5 M470.43,16.5 v-2 M476.10,16.5 v-2 M481.77,16.5 v-2 M487.45,16.5 v-2 M493.12,16.5 v-3.5 M498.80,16.5 v-2 M504.47,16.5 v-2 M510.15,16.5 v-2 M515.83,16.5 v-2 M521.50,16.5 v-5 M527.17,16.5 v-2 M532.85,16.5 v-2 M538.52,16.5 v-2 M544.20,16.5 v-2 M549.88,16.5 v-3.5 M555.55,16.5 v-2 M561.22,16.5 v-2 M566.90,16.5 v-2 M572.58,16.5 v-2 M578.25,16.5 v-5 M583.92,16.5 v-2 M589.60,16.5 v-2 M595.27,16.5 v-2 M600.95,16.5 v-2 M606.62,16.5 v-3.5 M612.30,16.5 v-2 M617.98,16.5 v-2 M623.65,16.5 v-2 M629.32,16.5 v-2 M635.00,16.5 v-5 M640.67,16.5 v-2 M646.35,16.5 v-2 M652.02,16.5 v-2 M657.70,16.5 v-2 M663.38,16.5 v-3.5 M669.05,16.5 v-2 M674.73,16.5 v-2 M680.40,16.5 v-2 M686.07,16.5 v-2 M691.75,16.5 v-5 M697.42,16.5 v-2 M703.10,16.5 v-2 M708.77,16.5 v-2 M714.45,16.5 v-2 M720.12,16.5 v-3.5 M725.80,16.5 v-2 M731.48,16.5 v-2 M737.15,16.5 v-2 M742.82,16.5 v-2 M748.50,16.5 v-5 M754.17,16.5 v-2 M759.85,16.5 v-2 M765.52,16.5 v-2 M771.20,16.5 v-2 M776.88,16.5 v-3.5 M782.55,16.5 v-2 M788.23,16.5 v-2 M793.90,16.5 v-2 M799.57,16.5 v-2 M805.25,16.5 v-5 M810.92,16.5 v-2 M816.60,16.5 v-2 M822.27,16.5 v-2 M827.95,16.5 v-2 M833.62,16.5 v-3.5 M839.30,16.5 v-2 M844.98,16.5 v-2 M850.65,16.5 v-2 M856.32,16.5 v-2 M862.00,16.5 v-5 M867.67,16.5 v-2 M873.35,16.5 v-2 M879.02,16.5 v-2 M884.70,16.5 v-2 M890.38,16.5 v-3.5 M896.05,16.5 v-2 M901.73,16.5 v-2 M907.40,16.5 v-2 M913.07,16.5 v-2 M918.75,16.5 v-5 M924.42,16.5 v-2 M930.10,16.5 v-2 M935.77,16.5 v-2" stroke="#6e6e6e" stroke-width="0.8" transform="translate(-37,0)"/></svg>
<div class="t" style="left:52.5px;top:144.5px;width:30px;text-align:center;font-size:9.5px;color:#777;letter-spacing:-0.3px">0</div>
<div class="t" style="left:109.2px;top:144.5px;width:30px;text-align:center;font-size:9.5px;color:#777;letter-spacing:-0.3px">20</div>
<div class="t" style="left:166.0px;top:144.5px;width:30px;text-align:center;font-size:9.5px;color:#777;letter-spacing:-0.3px">40</div>
<div class="t" style="left:222.8px;top:144.5px;width:30px;text-align:center;font-size:9.5px;color:#777;letter-spacing:-0.3px">60</div>
<div class="t" style="left:279.5px;top:144.5px;width:30px;text-align:center;font-size:9.5px;color:#777;letter-spacing:-0.3px">80</div>
<div class="t" style="left:336.2px;top:144.5px;width:30px;text-align:center;font-size:9.5px;color:#777;letter-spacing:-0.3px">100</div>
<div class="t" style="left:393.0px;top:144.5px;width:30px;text-align:center;font-size:9.5px;color:#777;letter-spacing:-0.3px">120</div>
<div class="t" style="left:449.8px;top:144.5px;width:30px;text-align:center;font-size:9.5px;color:#777;letter-spacing:-0.3px">140</div>
<div class="t" style="left:506.5px;top:144.5px;width:30px;text-align:center;font-size:9.5px;color:#777;letter-spacing:-0.3px">160</div>
<div class="t" style="left:563.2px;top:144.5px;width:30px;text-align:center;font-size:9.5px;color:#777;letter-spacing:-0.3px">180</div>
<div class="t" style="left:620.0px;top:144.5px;width:30px;text-align:center;font-size:9.5px;color:#777;letter-spacing:-0.3px">200</div>
<div class="t" style="left:676.8px;top:144.5px;width:30px;text-align:center;font-size:9.5px;color:#777;letter-spacing:-0.3px">220</div>
<div class="t" style="left:733.5px;top:144.5px;width:30px;text-align:center;font-size:9.5px;color:#777;letter-spacing:-0.3px">240</div>
<div class="t" style="left:790.2px;top:144.5px;width:30px;text-align:center;font-size:9.5px;color:#777;letter-spacing:-0.3px">260</div>
<div class="t" style="left:847.0px;top:144.5px;width:30px;text-align:center;font-size:9.5px;color:#777;letter-spacing:-0.3px">280</div>
<div class="t" style="left:918px;top:144.5px;font-size:9.5px;color:#666;">毫米</div>
<svg style="left:37px;top:0px" width="18" height="749" viewBox="0 0 18 749"><path d="M18,683.10 h-2 M18,677.42 h-3.5 M18,671.75 h-2 M18,666.07 h-2 M18,660.40 h-2 M18,654.72 h-2 M18,649.05 h-5 M18,643.38 h-2 M18,637.70 h-2 M18,632.02 h-2 M18,626.35 h-2 M18,620.67 h-3.5 M18,615.00 h-2 M18,609.32 h-2 M18,603.65 h-2 M18,597.97 h-2 M18,592.30 h-5 M18,586.62 h-2 M18,580.95 h-2 M18,575.27 h-2 M18,569.60 h-2 M18,563.92 h-3.5 M18,558.25 h-2 M18,552.57 h-2 M18,546.90 h-2 M18,541.22 h-2 M18,535.55 h-5 M18,529.88 h-2 M18,524.20 h-2 M18,518.52 h-2 M18,512.85 h-2 M18,507.17 h-3.5 M18,501.50 h-2 M18,495.82 h-2 M18,490.15 h-2 M18,484.47 h-2 M18,478.80 h-5 M18,473.12 h-2 M18,467.45 h-2 M18,461.77 h-2 M18,456.10 h-2 M18,450.42 h-3.5 M18,444.75 h-2 M18,439.07 h-2 M18,433.40 h-2 M18,427.72 h-2 M18,422.05 h-5 M18,416.37 h-2 M18,410.70 h-2 M18,405.02 h-2 M18,399.35 h-2 M18,393.67 h-3.5 M18,388.00 h-2 M18,382.32 h-2 M18,376.65 h-2 M18,370.97 h-2 M18,365.30 h-5 M18,359.62 h-2 M18,353.95 h-2 M18,348.27 h-2 M18,342.60 h-2 M18,336.92 h-3.5 M18,331.25 h-2 M18,325.57 h-2 M18,319.90 h-2 M18,314.22 h-2 M18,308.55 h-5 M18,302.87 h-2 M18,297.20 h-2 M18,291.52 h-2 M18,285.85 h-2 M18,280.17 h-3.5 M18,274.50 h-2 M18,268.82 h-2 M18,263.15 h-2 M18,257.47 h-2 M18,251.80 h-5 M18,246.12 h-2 M18,240.45 h-2 M18,234.77 h-2 M18,229.10 h-2 M18,223.42 h-3.5 M18,217.75 h-2 M18,212.07 h-2 M18,206.40 h-2 M18,200.72 h-2 M18,195.05 h-5 M18,189.38 h-2 M18,183.70 h-2 M18,178.02 h-2 M18,172.35 h-2 M18,166.67 h-3.5 M18,161.00 h-2" stroke="#6e6e6e" stroke-width="0.8"/></svg>
<div class="t" style="left:29.6px;top:642.6px;width:30px;height:10px;text-align:center;font-size:9.5px;color:#777;letter-spacing:-0.2px;transform:rotate(-90deg)">20</div>
<div class="t" style="left:29.6px;top:585.9px;width:30px;height:10px;text-align:center;font-size:9.5px;color:#777;letter-spacing:-0.2px;transform:rotate(-90deg)">40</div>
<div class="t" style="left:29.6px;top:529.1px;width:30px;height:10px;text-align:center;font-size:9.5px;color:#777;letter-spacing:-0.2px;transform:rotate(-90deg)">60</div>
<div class="t" style="left:29.6px;top:472.4px;width:30px;height:10px;text-align:center;font-size:9.5px;color:#777;letter-spacing:-0.2px;transform:rotate(-90deg)">80</div>
<div class="t" style="left:29.6px;top:415.6px;width:30px;height:10px;text-align:center;font-size:9.5px;color:#777;letter-spacing:-0.2px;transform:rotate(-90deg)">100</div>
<div class="t" style="left:29.6px;top:358.9px;width:30px;height:10px;text-align:center;font-size:9.5px;color:#777;letter-spacing:-0.2px;transform:rotate(-90deg)">120</div>
<div class="t" style="left:29.6px;top:302.1px;width:30px;height:10px;text-align:center;font-size:9.5px;color:#777;letter-spacing:-0.2px;transform:rotate(-90deg)">140</div>
<div class="t" style="left:29.6px;top:245.4px;width:30px;height:10px;text-align:center;font-size:9.5px;color:#777;letter-spacing:-0.2px;transform:rotate(-90deg)">160</div>
<div class="t" style="left:29.6px;top:188.6px;width:30px;height:10px;text-align:center;font-size:9.5px;color:#777;letter-spacing:-0.2px;transform:rotate(-90deg)">180</div>
<svg style="left:40px;top:145px" width="12" height="12" viewBox="0 0 12 12"><path d="M1,1.6 L10.6,11 M10.6,11 V7 M10.6,11 H6.6 M2,6 L6.4,1.2" fill="none" stroke="#8a8a8a" stroke-width="1"/></svg>
<svg style="left:407px;top:143px" width="2" height="16" viewBox="0 0 2 16"><path d="M1,0 V16" stroke="#111" stroke-width="1" stroke-dasharray="2 1.5"/></svg>
<svg style="left:37px;top:453px" width="18" height="2" viewBox="0 0 18 2"><path d="M0,1 H18" stroke="#111" stroke-width="1" stroke-dasharray="2 1.5"/></svg>
<div class="a" style="left:54px;top:160px;width:1px;height:526px;background:#6a6a6a;"></div>
<div class="a" style="left:54px;top:160px;width:886px;height:1px;background:#8e8e8e;"></div>
<div class="a" style="left:67px;top:161px;width:1px;height:507px;background:#555;"></div>
<div class="a" style="left:55px;top:668px;width:444px;height:1px;background:#6e6e6e;"></div>
<div class="a" style="left:924px;top:161px;width:15px;height:16px;background:#f0f0f0;"></div>
<svg style="left:927.5px;top:166.5px" width="8" height="6" viewBox="0 0 8 6"><path d="M0.6,5.2 L4,1.4 L7.4,5.2" fill="none" stroke="#333" stroke-width="1.8"/></svg>
<div class="a" style="left:924px;top:325px;width:15px;height:184px;background:#cdcdcd;"></div>
<div class="a" style="left:924px;top:651px;width:15px;height:16px;background:#f0f0f0;"></div>
<svg style="left:927.5px;top:656px" width="8" height="6" viewBox="0 0 8 6"><path d="M0.6,0.8 L4,4.6 L7.4,0.8" fill="none" stroke="#333" stroke-width="1.8"/></svg>
<svg style="left:926px;top:670px" width="13" height="13" viewBox="0 0 13 13"><circle cx="5.4" cy="5.4" r="4.6" fill="#fff" stroke="#444" stroke-width="1.1"/><path d="M8.8,8.8 L12,12" stroke="#444" stroke-width="1.6"/><path d="M5.4,2.6 V8.2 M2.6,5.4 H8.2" stroke="#444" stroke-width="0.9" stroke-dasharray="1.2 1"/></svg>
<div class="a" style="left:499px;top:669px;width:17px;height:16px;background:#f0f0f0;"></div>
<svg style="left:504px;top:672.5px" width="6" height="9" viewBox="0 0 6 9"><path d="M5,0.8 L1.2,4.5 L5,8.2" fill="none" stroke="#333" stroke-width="1.8"/></svg>
<div class="a" style="left:621px;top:669.3px;width:94px;height:15px;background:#cdcdcd;"></div>
<div class="a" style="left:715px;top:669px;width:195px;height:1px;background:#808080;"></div>
<svg style="left:911.5px;top:672.5px" width="6" height="9" viewBox="0 0 6 9"><path d="M1,0.8 L4.8,4.5 L1,8.2" fill="none" stroke="#333" stroke-width="1.8"/></svg>
<div class="a" style="left:55px;top:685.5px;width:866px;height:1px;background:#d6d6d6;"></div>
<div class="a" style="left:498px;top:669px;width:1px;height:16px;background:#8a8a8a;"></div>
<svg style="left:491px;top:671px" width="6" height="12" viewBox="0 0 6 12"><path d="M1,0 V12 M3.5,0 V12" stroke="#c8c8c8" stroke-width="1" stroke-dasharray="1 2"/></svg>
<svg style="left:57.5px;top:672px" width="10" height="10" viewBox="0 0 10 10"><path d="M0.6,9.4 V2.6 L2.6,0.6 H9.4 V9.4 Z" fill="#fff" stroke="#555" stroke-width="1"/><path d="M5,3 V7.6 M2.7,5.3 H7.3" stroke="#555" stroke-width="1"/></svg>
<svg style="left:74px;top:673px" width="11" height="9" viewBox="0 0 11 9"><path d="M1,0 V9" stroke="#c4c4c4" stroke-width="1.6"/><path d="M10,0 V9 L3,4.5 Z" fill="#c4c4c4"/></svg>
<svg style="left:92px;top:673px" width="8" height="9" viewBox="0 0 8 9"><path d="M7.6,0 V9 L0.4,4.5 Z" fill="#c4c4c4"/></svg>
<div class="t" style="left:106px;top:670.5px;font-size:13px;color:#111;word-spacing:1px">1 的 1</div>
<svg style="left:150px;top:673px" width="8" height="9" viewBox="0 0 8 9"><path d="M0.4,0 V9 L7.6,4.5 Z" fill="#c4c4c4"/></svg>
<svg style="left:165px;top:673px" width="11" height="9" viewBox="0 0 11 9"><path d="M10,0 V9" stroke="#c4c4c4" stroke-width="1.6"/><path d="M1,0 V9 L8,4.5 Z" fill="#c4c4c4"/></svg>
<svg style="left:182px;top:672px" width="10" height="10" viewBox="0 0 10 10"><path d="M0.6,9.4 V2.6 L2.6,0.6 H9.4 V9.4 Z" fill="#fff" stroke="#555" stroke-width="1"/><path d="M5,3 V7.6 M2.7,5.3 H7.3" stroke="#555" stroke-width="1"/></svg>
<svg style="left:200px;top:668px" width="54" height="17" viewBox="0 0 54 17"><path d="M0,0.5 H2.6 L9,16.5 H45.6 L51,0.5 H54" fill="none" stroke="#555" stroke-width="1"/><path d="M2.8,0 L9.2,16.2 H45.4 L50.8,0 Z" fill="#fff"/></svg>
<div class="t" style="left:215.5px;top:669.5px;font-size:13px;color:#111;letter-spacing:0.5px">页1</div>
<svg style="left:38.5px;top:689px" width="6" height="14" viewBox="0 0 6 14"><path d="M1,0 V14 M3.5,0 V14" stroke="#c8c8c8" stroke-width="1" stroke-dasharray="1 2"/></svg>
<svg style="left:51.5px;top:691px" width="5" height="9" viewBox="0 0 5 9"><path d="M0,0 L5,4.5 L0,9 Z" fill="#111"/></svg>
<svg style="left:66px;top:688px" width="16" height="16" viewBox="0 0 16 16"><path d="M1,15 L2,12.2 L9,5.2 L10.8,7 L3.8,14 Z" fill="#888" stroke="#333" stroke-width="0.9"/><path d="M8.2,3.8 L9.4,2.6 L10.2,3.4 L12.2,1.4 Q13.4,0.6 14.4,1.6 Q15.4,2.6 14.6,3.8 L12.6,5.8 L13.4,6.6 L12.2,7.8 Z" fill="#222"/></svg>
<svg style="left:88px;top:691px" width="8" height="10" viewBox="0 0 8 10"><path d="M6.6,0.8 L1.8,5 L6.6,9.2" fill="none" stroke="#dcdcdc" stroke-width="2"/></svg>
<div class="box" style="left:101px;top:687px;width:18px;height:18px;border-color:#333"></div>
<svg style="left:102px;top:688px" width="16" height="16" viewBox="0 0 16 16"><path d="M0,0 L16,16 M16,0 L0,16" stroke="#222" stroke-width="1"/></svg>
<div class="a" style="left:119px;top:687.5px;width:16.5px;height:17px;background:#9a9a9a;"></div>
<div class="a" style="left:135.5px;top:687.5px;width:17px;height:17px;background:#00a0e9;"></div>
<div class="a" style="left:152.5px;top:687.5px;width:17.5px;height:17px;background:#e60012;"></div>
<svg style="left:920px;top:692px" width="9" height="9" viewBox="0 0 9 9"><path d="M0.6,0.8 L3.8,4.5 L0.6,8.2 M4.8,0.8 L8,4.5 L4.8,8.2" fill="none" stroke="#cfcfcf" stroke-width="1.2"/></svg>
<svg style="left:943px;top:151px" width="16" height="28" viewBox="0 0 16 28"><path d="M2,15.6 L3,13.4 L9.6,6.8 L11,8.2 L4.4,14.8 Z M8.6,5.8 L13,1.4 L15,3.4 L10.6,7.8 Z" fill="#d4d4d4"/></svg>
<svg style="left:945px;top:174px" width="12" height="8" viewBox="0 0 12 8"><path d="M0.8,7 L6,1.4 L11.2,7" fill="none" stroke="#dcdcdc" stroke-width="1.8"/></svg>
<div class="box" style="left:942px;top:187.3px;width:18px;height:17.0px;border-color:#444"></div>
<svg style="left:943px;top:188.3px" width="16" height="15" viewBox="0 0 16 15"><path d="M0,0 L16,15 M16,0 L0,15" stroke="#222" stroke-width="1"/></svg>
<div class="a" style="left:942px;top:204.3px;width:18px;height:17.3px;background:#231815;"></div>
<div class="a" style="left:942px;top:221.4px;width:18px;height:17.3px;background:#3e3a39;"></div>
<div class="a" style="left:942px;top:238.4px;width:18px;height:17.3px;background:#595757;"></div>
<div class="a" style="left:942px;top:255.5px;width:18px;height:17.3px;background:#727171;"></div>
<div class="a" style="left:942px;top:272.5px;width:18px;height:17.3px;background:#898989;"></div>
<div class="a" style="left:942px;top:289.5px;width:18px;height:17.3px;background:#9fa0a0;"></div>
<div class="a" style="left:942px;top:306.6px;width:18px;height:17.3px;background:#b5b5b6;"></div>
<div class="a" style="left:942px;top:323.6px;width:18px;height:17.3px;background:#c9caca;"></div>
<div class="a" style="left:942px;top:340.7px;width:18px;height:17.3px;background:#dcdddd;"></div>
<div class="a" style="left:942px;top:357.7px;width:18px;height:17.3px;background:#efefef;"></div>
<div class="a" style="left:942px;top:374.7px;width:18px;height:17.3px;background:#ffffff;"></div>
<div class="a" style="left:942px;top:391.8px;width:18px;height:17.3px;background:#1d2088;"></div>
<div class="a" style="left:942px;top:408.8px;width:18px;height:17.3px;background:#00a0e9;"></div>
<div class="a" style="left:942px;top:425.9px;width:18px;height:17.3px;background:#009944;"></div>
<div class="a" style="left:942px;top:442.9px;width:18px;height:17.3px;background:#fff100;"></div>
<div class="a" style="left:942px;top:459.9px;width:18px;height:17.3px;background:#e60012;"></div>
<div class="a" style="left:942px;top:477.0px;width:18px;height:17.3px;background:#e4007f;"></div>
<div class="a" style="left:942px;top:494.0px;width:18px;height:17.3px;background:#a5458c;"></div>
<div class="a" style="left:942px;top:511.1px;width:18px;height:17.3px;background:#f08300;"></div>
<div class="a" style="left:942px;top:528.1px;width:18px;height:17.3px;background:#f5b2b2;"></div>
<div class="a" style="left:942px;top:545.1px;width:18px;height:17.3px;background:#84726b;"></div>
<div class="a" style="left:942px;top:562.2px;width:18px;height:17.3px;background:#d3cfe6;"></div>
<div class="a" style="left:942px;top:579.2px;width:18px;height:17.3px;background:#a59aca;"></div>
<div class="a" style="left:942px;top:596.3px;width:18px;height:17.3px;background:#6a8ccb;"></div>
<div class="a" style="left:942px;top:613.3px;width:18px;height:17.3px;background:#7a68ae;"></div>
<div class="a" style="left:942px;top:630.3px;width:18px;height:17.3px;background:#9182b0;"></div>
<div class="a" style="left:942px;top:647.4px;width:18px;height:17.3px;background:#4a6496;"></div>
<svg style="left:944.5px;top:669px" width="12" height="8" viewBox="0 0 12 8"><path d="M0.8,1 L6,6.6 L11.2,1" fill="none" stroke="#dcdcdc" stroke-width="1.8"/></svg>
<svg style="left:946px;top:685px" width="10" height="10" viewBox="0 0 10 10"><path d="M0.6,0.8 L4.2,5 L0.6,9.2 M5.2,0.8 L8.8,5 L5.2,9.2" fill="none" stroke="#d2d2d2" stroke-width="1.3"/></svg>
<div class="t" style="left:12px;top:719.5px;font-size:12px;color:#222;letter-spacing:-0.45px">( 160.464, 190.715 )</div>
<svg style="left:133px;top:721px" width="5" height="9" viewBox="0 0 5 9"><path d="M0,0 L5,4.5 L0,9 Z" fill="#111"/></svg>
<div class="t" style="left:169px;top:718.5px;font-size:12.5px;color:#111;letter-spacing:0.05px">椭圆形 于 图层 1</div>
<svg style="left:504.5px;top:716.5px" width="16" height="16" viewBox="0 0 16 16"><rect x="0.9" y="0.9" width="13.8" height="9.8" fill="#2f8fd6" stroke="#d0202a" stroke-width="1.8"/><path d="M2.4,4.6 H13.2" stroke="#fff" stroke-width="1.4" stroke-dasharray="2.2 1.2"/><path d="M3.4,14.8 H12.2" stroke="#222" stroke-width="1.5"/><path d="M7.8,11.4 V14.4" stroke="#222" stroke-width="2"/></svg>
<svg style="left:538px;top:717px" width="17" height="17" viewBox="0 0 17 17"><path d="M7.6,1 L14,7.4 L7.6,13.8 L1.2,7.4 Z" fill="#fff" stroke="#111" stroke-width="1.5"/><path d="M4,8 H11.2 L7.6,11.6 Z" fill="#e0202c"/><path d="M14.4,9.6 L16.6,14.6 H12.2 Z" fill="#e0202c"/></svg>
<div class="a" style="left:556px;top:714px;width:22px;height:22px;background:#00a0e9;border:1px solid #2b7fb0"></div>
<div class="t" style="left:582.5px;top:719px;font-size:12px;color:#222;letter-spacing:-0.5px">C: 100 M: 0 Y: 0 K: 0</div>
<div class="a" style="left:736.5px;top:712px;width:1px;height:26px;background:#dcdcdc;"></div>
<svg style="left:752px;top:716.5px" width="9" height="17" viewBox="0 0 9 17"><path d="M4.4,0.8 L7.8,7.4 L6.2,11.2 H2.6 L1,7.4 Z" fill="#fff" stroke="#222" stroke-width="1.1"/><path d="M4.4,1.6 V7" stroke="#222" stroke-width="0.9"/><rect x="2.4" y="11.2" width="4" height="3.8" fill="#fff" stroke="#222" stroke-width="1.1"/></svg>
<svg style="left:763px;top:715px" width="22" height="21" viewBox="0 0 22 21"><path d="M0.5,0.5 L21,20" stroke="#222" stroke-width="1.2"/><path d="M0.5,20.2 L10.2,10.6" stroke="#222" stroke-width="1.2"/></svg>
</body></html>
